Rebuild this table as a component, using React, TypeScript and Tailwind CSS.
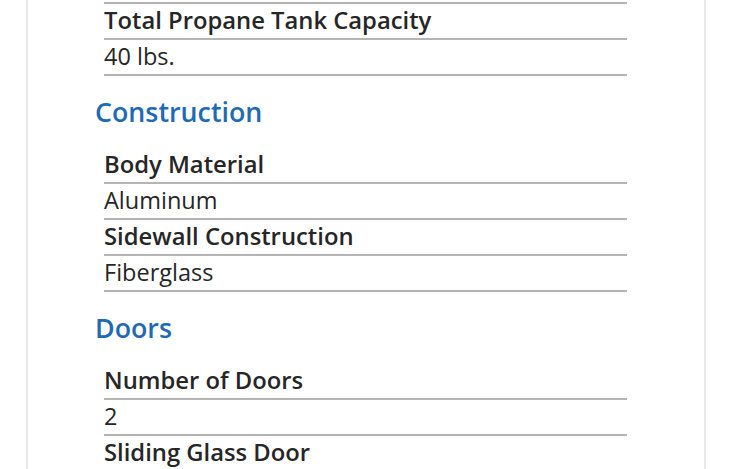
import React from 'react';

interface Spec {
  label: string;
  value: string;
}

interface SpecSection {
  title?: string;
  specs: Spec[];
}

const sections: SpecSection[] = [
  {
    specs: [{ label: 'Total Propane Tank Capacity', value: '40 lbs.' }],
  },
  {
    title: 'Construction',
    specs: [
      { label: 'Body Material', value: 'Aluminum' },
      { label: 'Sidewall Construction', value: 'Fiberglass' },
    ],
  },
  {
    title: 'Doors',
    specs: [
      { label: 'Number of Doors', value: '2' },
      { label: 'Sliding Glass Door', value: '' },
    ],
  },
];

const Row: React.FC<{ text: string; bold?: boolean }> = ({ text, bold }) => (
  <div
    className={`h-[36px] border-b-2 border-[#b4b4b4] flex items-center leading-none text-[#262626] ${
      bold ? 'font-semibold text-[23.8px]' : 'font-normal text-[23.5px]'
    }`}
  >
    {text}
  </div>
);

export default function App() {
  return (
    <div
      className="bg-white w-[731px] h-[469px] overflow-hidden"
      style={{ fontFamily: '"Open Sans", "Noto Sans", sans-serif' }}
    >
      <div className="ml-[26px] w-[680px] h-full border-x-2 border-[#e8e8e8] pl-[76px] pr-[77px] pt-[2px]">
        {sections.map((section, i) => (
          <div key={i}>
            {section.title ? (
              <h2 className="h-[72px] flex items-center pt-[1px] -ml-[9px] text-[26.8px] font-semibold text-[#1f6ab4] leading-none">
                {section.title}
              </h2>
            ) : (
              <div className="border-t-2 border-[#b4b4b4]" />
            )}
            <div className="flex flex-col">
              {section.specs.map((spec) => (
                <React.Fragment key={spec.label}>
                  <Row text={spec.label} bold />
                  {spec.value && <Row text={spec.value} />}
                </React.Fragment>
              ))}
            </div>
          </div>
        ))}
      </div>
    </div>
  );
}
